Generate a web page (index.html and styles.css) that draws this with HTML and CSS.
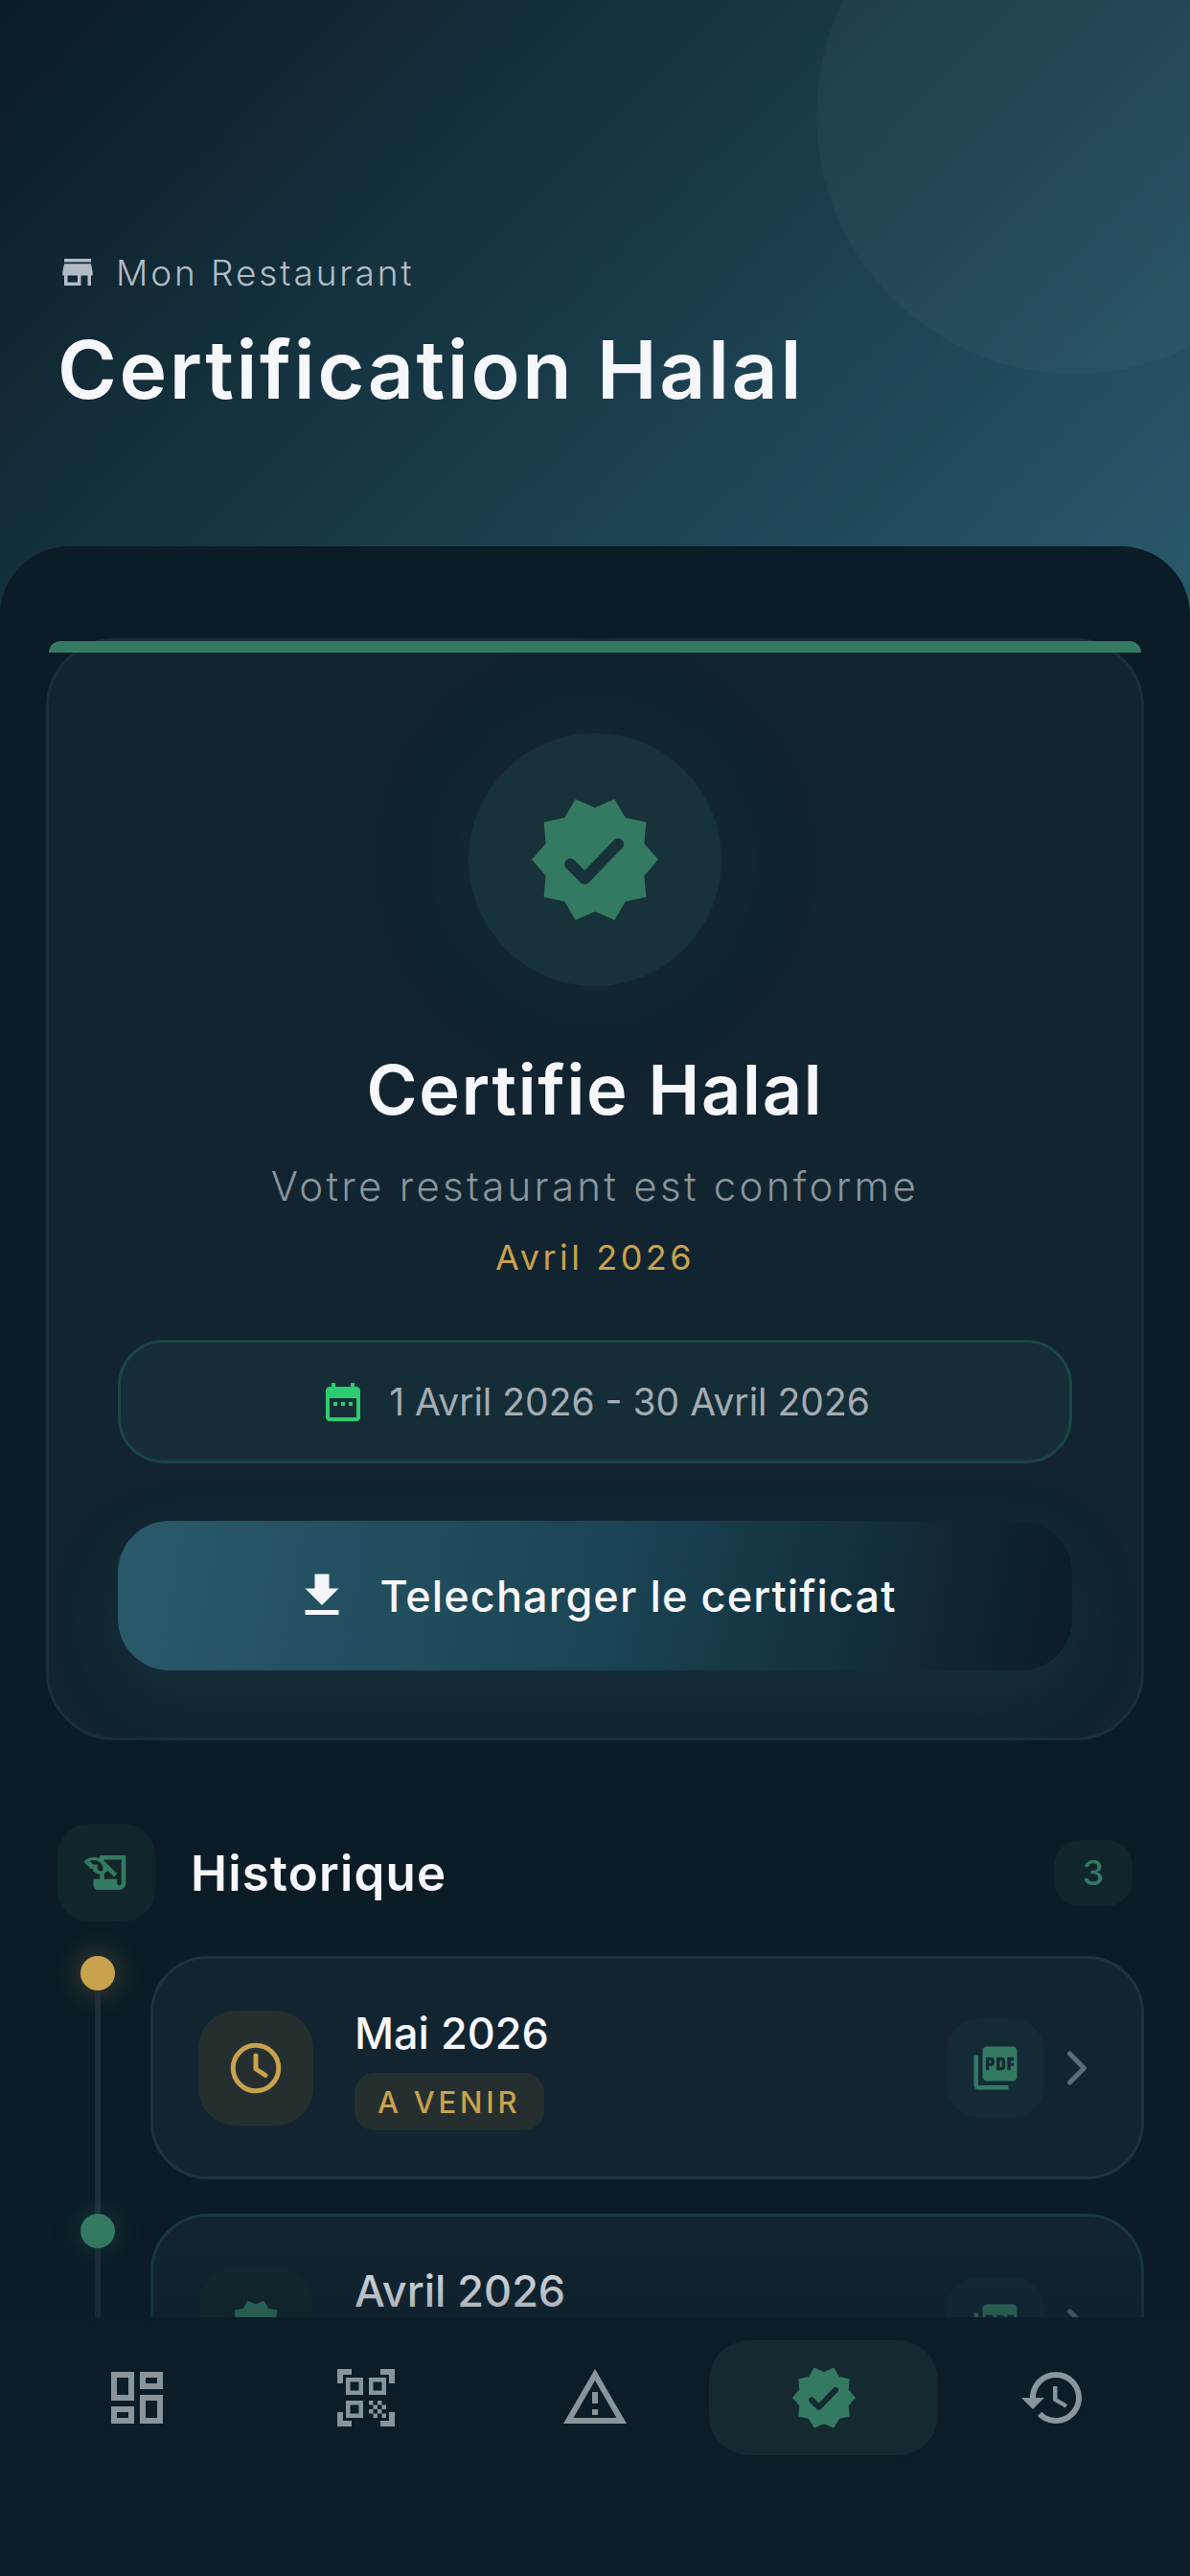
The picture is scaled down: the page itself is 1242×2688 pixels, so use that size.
FILE: index.html
```html
<!DOCTYPE html>
<html lang="fr">
  <head>
    <meta charset="UTF-8" />
    <meta name="viewport" content="width=device-width, initial-scale=1.0" />
    <title>Certification Halal</title>
    <link rel="stylesheet" href="styles.css">
  </head>
  <body>
    <main class="screen">
      <header class="hero">
        <div class="hero-circle"></div>
        <div class="hero-place">
          <svg class="hero-place-icon" viewBox="0 0 24 24"><path d="M20 4H4v2h16V4zm1 10v-2l-1-5H4l-1 5v2h1v6h10v-6h4v6h2v-6h1zm-9 4H6v-4h6v4z"/></svg>
          <span>Mon Restaurant</span>
        </div>
        <h1 class="hero-title">Certification Halal</h1>
      </header>

      <section class="sheet">
        <div class="status-card">
          <div class="status-circle">
            <svg class="status-badge" viewBox="0 0 24 24">
              <path d="M23 12l-2.44-2.79.34-3.69-3.61-.82-1.89-3.2L12 2.96 8.6 1.5 6.71 4.69 3.1 5.5l.34 3.7L1 12l2.44 2.79-.34 3.7 3.61.82L8.6 22.5l3.4-1.47 3.4 1.46 1.89-3.19 3.61-.82-.34-3.69L23 12z"/>
              <polyline class="check-big" points="7.7,12.8 10.2,15.3 16,9.3"/>
            </svg>
          </div>
          <h2 class="status-title">Certifie Halal</h2>
          <p class="status-sub">Votre restaurant est conforme</p>
          <p class="status-month">Avril 2026</p>

          <div class="date-pill">
            <svg class="date-icon" viewBox="0 0 24 24"><path d="M19 4h-1V2h-2v2H8V2H6v2H5c-1.1 0-2 .9-2 2v14c0 1.1.9 2 2 2h14c1.1 0 2-.9 2-2V6c0-1.1-.9-2-2-2zm0 16H5V10h14v10zM7 12h2v2H7zm4 0h2v2h-2zm4 0h2v2h-2z"/></svg>
            <span>1 Avril 2026 - 30 Avril 2026</span>
          </div>

          <button class="download-btn">
            <svg class="download-icon" viewBox="0 0 24 24"><path d="M19 9h-4V3H9v6H5l7 7 7-7zM5 18v2h14v-2H5z"/></svg>
            <span>Telecharger le certificat</span>
          </button>
        </div>

        <div class="history-head">
          <div class="history-icon">
            <svg viewBox="0 0 24 24"><path fill-rule="evenodd" d="M9 4v1.38c-.83-.33-1.72-.5-2.61-.5-1.79 0-3.58.68-4.95 2.05l3.33 3.33h1.11v1.11c.86.86 1.98 1.31 3.11 1.36V15H6v3c0 1.1.9 2 2 2h10c1.66 0 3-1.34 3-3V4H9zm-1.11 6.41V8.26H5.74L4.3 6.82c.65-.4 1.35-.6 2.09-.6 1.07 0 2.07.42 2.83 1.17.75.76 1.17 1.76 1.17 2.83 0 .3-.04.6-.1.88-.9.25-1.72.12-2.4-.69zM11 6h8v11c0 .55-.45 1-1 1s-1-.45-1-1v-2h-6v-2.59c.57-.23 1.1-.57 1.56-1.03l.2-.2L15.59 14 17 12.59 11.41 7H11V6z"/></svg>
          </div>
          <h3 class="history-title">Historique</h3>
          <span class="history-count">3</span>
        </div>

        <div class="timeline">
          <div class="tl-row">
            <div class="tl-rail">
              <span class="tl-dot tl-dot-gold"></span>
              <span class="tl-line"></span>
            </div>
            <div class="tl-card">
              <div class="tl-icon tl-icon-gold">
                <svg viewBox="0 0 24 24"><circle cx="12" cy="12" r="9.5"/><polyline points="12,6.8 12,12.4 16,15"/></svg>
              </div>
              <div class="tl-text">
                <div class="tl-month">Mai 2026</div>
                <span class="tl-tag">A VENIR</span>
              </div>
              <div class="tl-pdf">
                <svg viewBox="0 0 24 24"><path d="M20 2H8c-1.1 0-2 .9-2 2v12c0 1.1.9 2 2 2h12c1.1 0 2-.9 2-2V4c0-1.1-.9-2-2-2zm-8.5 7.5c0 .83-.67 1.5-1.5 1.5H9v2H7.5V7H10c.83 0 1.5.67 1.5 1.5v1zm5 2c0 .83-.67 1.5-1.5 1.5h-2.5V7H15c.83 0 1.5.67 1.5 1.5v3zm4-3H19v1h1.5V11H19v2h-1.5V7h3v1.5zM9 9.5h1v-1H9v1zM4 6H2v14c0 1.1.9 2 2 2h14v-2H4V6zm10 5.5h1v-3h-1v3z"/></svg>
              </div>
              <svg class="tl-chevron" viewBox="0 0 24 24"><polyline points="9,6 15,12 9,18"/></svg>
            </div>
          </div>

          <div class="tl-row">
            <div class="tl-rail">
              <span class="tl-dot tl-dot-green"></span>
              <span class="tl-line"></span>
            </div>
            <div class="tl-card tl-card-done">
              <div class="tl-icon tl-icon-green">
                <svg viewBox="0 0 24 24"><path d="M23 12l-2.44-2.79.34-3.69-3.61-.82-1.89-3.2L12 2.96 8.6 1.5 6.71 4.69 3.1 5.5l.34 3.7L1 12l2.44 2.79-.34 3.7 3.61.82L8.6 22.5l3.4-1.47 3.4 1.46 1.89-3.19 3.61-.82-.34-3.69L23 12z"/></svg>
              </div>
              <div class="tl-text">
                <div class="tl-month">Avril 2026</div>
              </div>
              <div class="tl-pdf">
                <svg viewBox="0 0 24 24"><path d="M20 2H8c-1.1 0-2 .9-2 2v12c0 1.1.9 2 2 2h12c1.1 0 2-.9 2-2V4c0-1.1-.9-2-2-2zm-8.5 7.5c0 .83-.67 1.5-1.5 1.5H9v2H7.5V7H10c.83 0 1.5.67 1.5 1.5v1zm5 2c0 .83-.67 1.5-1.5 1.5h-2.5V7H15c.83 0 1.5.67 1.5 1.5v3zm4-3H19v1h1.5V11H19v2h-1.5V7h3v1.5zM9 9.5h1v-1H9v1zM4 6H2v14c0 1.1.9 2 2 2h14v-2H4V6zm10 5.5h1v-3h-1v3z"/></svg>
              </div>
              <svg class="tl-chevron" viewBox="0 0 24 24"><polyline points="9,6 15,12 9,18"/></svg>
            </div>
          </div>
        </div>
        <div class="sheet-fade"></div>
      </section>
    </main>

    <nav class="tabbar">
      <a class="tab">
        <svg viewBox="0 0 24 24"><path d="M19 5v2h-4V5h4M9 5v6H5V5h4m10 8v6h-4v-6h4M9 17v2H5v-2h4M21 3h-8v6h8V3zM11 3H3v10h8V3zm10 8h-8v10h8V11zm-10 4H3v6h8v-6z"/></svg>
      </a>
      <a class="tab">
        <svg viewBox="0 0 24 24"><path d="M9.5 6.5v3h-3v-3h3M11 5H5v6h6V5zm-1.5 9.5v3h-3v-3h3M11 13H5v6h6v-6zm6.5-6.5v3h-3v-3h3M19 5h-6v6h6V5zm-6 8h1.5v1.5H13V13zm1.5 1.5H16V16h-1.5v-1.5zM16 13h1.5v1.5H16V13zm-3 3h1.5v1.5H13V16zm1.5 1.5H16V19h-1.5v-1.5zM16 16h1.5v1.5H16V16zm1.5-1.5H19V16h-1.5v-1.5zm0 3H19V19h-1.5v-1.5zM22 7h-2V4h-3V2h5v5zm0 15v-5h-2v3h-3v2h5zM2 22h5v-2H4v-3H2v5zM2 2v5h2V4h3V2H2z"/></svg>
      </a>
      <a class="tab">
        <svg viewBox="0 0 24 24"><path d="M12 5.99L19.53 19H4.47L12 5.99M12 2L1 21h22L12 2zm1 14h-2v2h2v-2zm0-6h-2v4h2v-4z"/></svg>
      </a>
      <a class="tab tab-active">
        <svg viewBox="0 0 24 24">
          <path d="M23 12l-2.44-2.79.34-3.69-3.61-.82-1.89-3.2L12 2.96 8.6 1.5 6.71 4.69 3.1 5.5l.34 3.7L1 12l2.44 2.79-.34 3.7 3.61.82L8.6 22.5l3.4-1.47 3.4 1.46 1.89-3.19 3.61-.82-.34-3.69L23 12z"/>
          <polyline class="check-small" points="7.7,12.8 10.2,15.3 16,9.3"/>
        </svg>
      </a>
      <a class="tab">
        <svg viewBox="0 0 24 24"><path d="M13 3c-4.97 0-9 4.03-9 9H1l3.89 3.89.07.14L9 12H6c0-3.87 3.13-7 7-7s7 3.13 7 7-3.13 7-7 7c-1.93 0-3.68-.79-4.94-2.06l-1.42 1.42C8.27 19.99 10.51 21 13 21c4.97 0 9-4.03 9-9s-4.03-9-9-9zm-1 5v5l4.28 2.54.72-1.21-3.5-2.08V8H12z"/></svg>
      </a>
    </nav>
  </body>
</html>
```
FILE: styles.css
```css
body {
  margin: 0;
  width: 1242px;
  height: 2688px;
  overflow: hidden;
  display: flex;
  flex-direction: column;
  background: #0b1c26;
  font-family: "Inter", "Open Sans", sans-serif;
  color: #f5f7fb;
}
h1, h2, h3, p {
  margin: 0;
}
svg {
  display: block;
}

.screen {
  flex: 1;
  min-height: 0;
  overflow: hidden;
}

/* header */
.hero {
  position: relative;
  overflow: hidden;
  height: 662px;
  padding: 262px 60px 0;
  box-sizing: border-box;
  background: linear-gradient(135deg, #0b1c26 0%, #1a3d4c 55%, #2a5a6a 100%);
}
.hero-circle {
  position: absolute;
  top: -150px;
  right: -150px;
  width: 540px;
  height: 540px;
  border-radius: 50%;
  background: rgba(255, 255, 255, 0.03);
}
.hero-place {
  display: flex;
  align-items: center;
  gap: 19px;
  height: 44px;
  font-size: 37px;
  font-weight: 300;
  letter-spacing: 2.9px;
  color: #b3bcc4;
}
.hero-place-icon {
  width: 42px;
  height: 42px;
  fill: #b3bcc4;
}
.hero-title {
  margin-top: 32px;
  font-size: 84px;
  line-height: 96px;
  font-weight: 600;
  letter-spacing: 2.6px;
}

/* sheet */
.sheet {
  position: relative;
  margin-top: -92px;
  padding-top: 96px;
  border-radius: 72px 72px 0 0;
  background: #0b1c26;
}

/* status card */
.status-card {
  position: relative;
  margin: 0 48px;
  padding: 96px 72px 70px;
  display: flex;
  flex-direction: column;
  align-items: center;
  border: 3px solid #1a2e39;
  border-radius: 72px;
  background: #112430;
}
.status-card::before {
  content: "";
  position: absolute;
  top: 0;
  left: 0;
  right: 0;
  height: 12px;
  border-radius: 24px 24px 0 0;
  background: #347a63;
}
.status-circle {
  width: 264px;
  height: 264px;
  display: flex;
  align-items: center;
  justify-content: center;
  border-radius: 50%;
  background: #18323a;
  box-shadow: 0 0 150px rgba(47, 125, 101, 0.07);
}
.status-badge {
  width: 144px;
  height: 144px;
  fill: #347a63;
}
.check-big {
  fill: none;
  stroke: #18323a;
  stroke-width: 2;
  stroke-linecap: round;
  stroke-linejoin: round;
}
.status-title {
  margin-top: 66px;
  font-size: 72px;
  line-height: 84px;
  font-weight: 600;
  letter-spacing: 1.8px;
}
.status-sub {
  margin-top: 32px;
  font-size: 42px;
  line-height: 54px;
  font-weight: 300;
  letter-spacing: 3.3px;
  color: #8a949b;
}
.status-month {
  margin-top: 23px;
  font-size: 36px;
  line-height: 48px;
  letter-spacing: 3.5px;
  color: #c9a24d;
}
.date-pill {
  margin-top: 62px;
  width: 100%;
  height: 129px;
  box-sizing: border-box;
  display: flex;
  align-items: center;
  justify-content: center;
  gap: 24px;
  border: 3px solid #1c4542;
  border-radius: 48px;
  background: #152d36;
  font-size: 39px;
  color: #a4adb2;
}
.date-icon {
  width: 48px;
  height: 48px;
  fill: #2ecc71;
}
.download-btn {
  margin-top: 60px;
  width: 100%;
  height: 156px;
  display: flex;
  align-items: center;
  justify-content: center;
  gap: 30px;
  border: 0;
  border-radius: 54px;
  background: linear-gradient(100deg, #2a5a6a 0%, #1b4555 50%, #0c1c26 100%);
  box-shadow: 0 24px 72px rgba(42, 90, 106, 0.2);
  font-family: inherit;
  font-size: 45px;
  font-weight: 500;
  letter-spacing: 1.1px;
  color: #f5f7fb;
}
.download-icon {
  width: 60px;
  height: 60px;
  fill: #f5f7fb;
}

/* history */
.history-head {
  margin: 87px 60px 0;
  height: 102px;
  display: flex;
  align-items: center;
  gap: 37px;
}
.history-icon {
  width: 102px;
  height: 102px;
  display: flex;
  align-items: center;
  justify-content: center;
  border-radius: 33px;
  background: #10262b;
}
.history-icon svg {
  width: 54px;
  height: 54px;
  fill: #347a63;
}
.history-title {
  flex: 1;
  font-size: 51px;
  font-weight: 600;
  letter-spacing: 1.2px;
}
.history-count {
  width: 82px;
  height: 69px;
  display: flex;
  align-items: center;
  justify-content: center;
  border-radius: 27px;
  background: #10262b;
  font-size: 36px;
  font-weight: 500;
  color: #347a63;
}

/* timeline */
.timeline {
  margin: 36px 48px 0 84px;
  display: flex;
  flex-direction: column;
  gap: 36px;
}
.tl-row {
  display: flex;
  gap: 37px;
}
.tl-rail {
  width: 36px;
  display: flex;
  flex-direction: column;
  align-items: center;
}
.tl-dot {
  width: 36px;
  height: 36px;
  flex-shrink: 0;
  border-radius: 50%;
}
.tl-dot-gold {
  background: #c9a24d;
  box-shadow: 0 0 30px rgba(201, 162, 77, 0.35);
}
.tl-dot-green {
  background: #347a63;
  box-shadow: 0 0 30px rgba(52, 122, 99, 0.35);
}
.tl-line {
  flex: 1;
  width: 6px;
  margin-bottom: -36px;
  background: #1e2f38;
}
.tl-card {
  flex: 1;
  height: 233px;
  box-sizing: border-box;
  display: flex;
  align-items: center;
  padding: 0 37px 0 47px;
  border: 3px solid #1e3340;
  border-radius: 60px;
  background: #112430;
}
.tl-card-done {
  border-color: #17393f;
}
.tl-icon {
  width: 120px;
  height: 120px;
  flex-shrink: 0;
  display: flex;
  align-items: center;
  justify-content: center;
  border-radius: 39px;
}
.tl-icon-gold {
  background: #252f30;
}
.tl-icon-gold svg {
  width: 60px;
  height: 60px;
  fill: none;
  stroke: #c9a24d;
  stroke-width: 2;
  stroke-linecap: round;
  stroke-linejoin: round;
}
.tl-icon-green {
  background: #13282f;
}
.tl-icon-green svg {
  width: 60px;
  height: 60px;
  fill: #347a63;
}
.tl-text {
  flex: 1;
  align-self: flex-start;
  margin: 51px 0 0 43px;
  display: flex;
  flex-direction: column;
  align-items: flex-start;
  gap: 14px;
}
.tl-month {
  font-size: 45px;
  line-height: 54px;
  font-weight: 500;
}
.tl-tag {
  height: 60px;
  padding: 0 24px;
  display: flex;
  align-items: center;
  border-radius: 21px;
  background: #252f30;
  font-size: 31px;
  font-weight: 500;
  letter-spacing: 3.8px;
  color: #c9a24d;
}
.tl-pdf {
  width: 102px;
  height: 102px;
  flex-shrink: 0;
  display: flex;
  align-items: center;
  justify-content: center;
  border-radius: 33px;
  background: #142a35;
}
.tl-pdf svg {
  width: 54px;
  height: 54px;
  fill: #347a63;
}
.tl-chevron {
  width: 60px;
  height: 60px;
  margin-left: 4px;
  fill: none;
  stroke: #5f6b73;
  stroke-width: 2;
  stroke-linecap: round;
  stroke-linejoin: round;
}
.sheet-fade {
  position: absolute;
  left: 0;
  right: 0;
  top: 1760px;
  height: 88px;
  background: linear-gradient(rgba(11, 28, 38, 0), rgba(11, 28, 38, 0.35));
}

/* bottom bar */
.tabbar {
  height: 270px;
  flex-shrink: 0;
  box-sizing: border-box;
  display: flex;
  align-items: flex-start;
  padding: 24px 24px 0;
  background: #0c1d27;
}
.tab {
  flex: 1;
  height: 120px;
  display: flex;
  align-items: center;
  justify-content: center;
  border-radius: 42px;
}
.tab svg {
  width: 72px;
  height: 72px;
  fill: #8a949b;
}
.tab-active {
  background: #142a30;
}
.tab-active svg {
  fill: #347a63;
}
.check-small {
  fill: none;
  stroke: #142a30;
  stroke-width: 2;
  stroke-linecap: round;
  stroke-linejoin: round;
}
```
